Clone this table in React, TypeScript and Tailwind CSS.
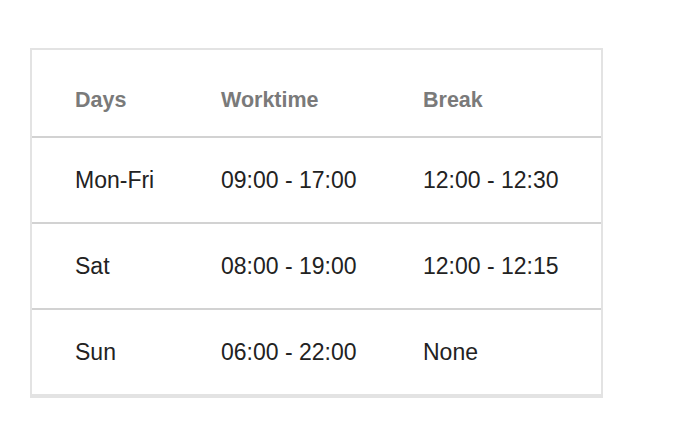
const rows = [
  { day: 'Mon-Fri', work: '09:00 - 17:00', brk: '12:00 - 12:30' },
  { day: 'Sat', work: '08:00 - 19:00', brk: '12:00 - 12:15' },
  { day: 'Sun', work: '06:00 - 22:00', brk: 'None' },
]

export default function App() {
  return (
    <div className="min-h-screen w-full bg-white pt-[48px] pl-[30px]" style={{ fontFamily: '"Liberation Sans", Arial, sans-serif' }}>
      <div className="w-[573px] border-2 border-b-4 border-[#e3e3e3] bg-white">
        {/* header */}
        <div className="grid grid-cols-[189px_202px_1fr] h-[88px] items-end pb-[25px] border-b-2 border-[#d2d2d2] text-[21.5px] font-bold text-[#7a7a7a] leading-[22px]">
          <div className="pl-[43px]">Days</div>
          <div>Worktime</div>
          <div>Break</div>
        </div>
        {rows.map((r, i) => (
          <div key={r.day}
            className={`grid grid-cols-[189px_202px_1fr] items-center text-[23px] text-[#222] leading-[24px] ${i < rows.length - 1 ? 'h-[86px] border-b-2 border-[#d2d2d2]' : 'h-[84px]'}`}>
            <div className="pl-[43px]">{r.day}</div>
            <div>{r.work}</div>
            <div>{r.brk}</div>
          </div>
        ))}
      </div>
    </div>
  )
}
